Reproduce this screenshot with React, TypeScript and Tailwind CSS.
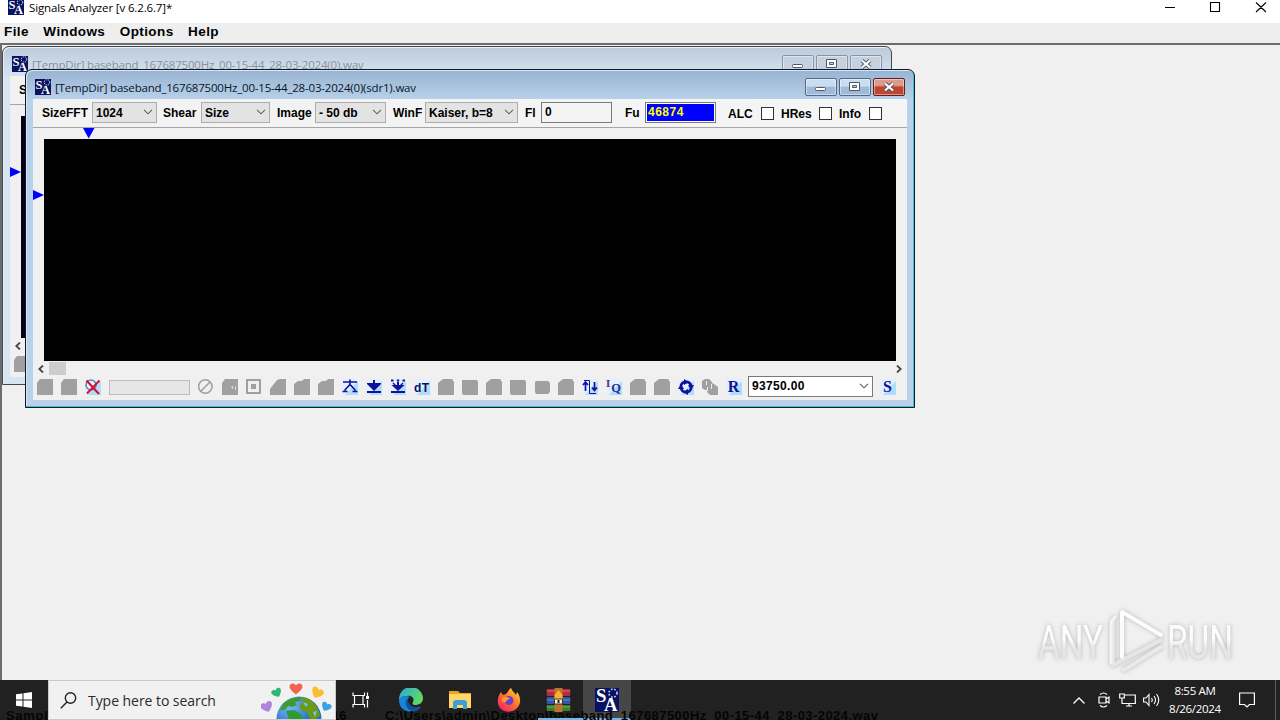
import type { ReactNode } from 'react'

const uiFont = 'font-["Liberation_Sans",Arial,sans-serif]'
const titleFont = 'font-["Open_Sans","Noto_Sans",sans-serif]'

const SaIcon = ({ size = 16 }: { size?: number }) => (
  <svg width={size} height={size} viewBox="0 0 16 16" className="shrink-0">
    <rect width="16" height="16" fill="#0a1160" />
    <text x="0.6" y="9.6" fontSize="12.5" fontWeight="700" fontFamily="Liberation Serif, serif" fill="#fff">S</text>
    <text x="6" y="15.4" fontSize="12.5" fontWeight="700" fontFamily="Liberation Serif, serif" fill="#fff">A</text>
    <circle cx="12" cy="3.4" r="2.7" fill="none" stroke="#b9cdf5" strokeWidth="1.1" strokeDasharray="1.1 1.1" />
  </svg>
)

const Chevron = () => (
  <svg width="10" height="6" viewBox="0 0 10 6" fill="none" stroke="#606060" strokeWidth="1.1" className="shrink-0">
    <path d="M1 .8 5 4.8 9 .8" />
  </svg>
)

const Label = ({ children, className }: { children: ReactNode; className: string }) => (
  <span className={`shrink-0 whitespace-nowrap ${className}`}>{children}</span>
)

const Select = ({ value, className }: { value: string; className: string }) => (
  <div className={`flex h-[21px] shrink-0 -translate-y-px items-center justify-between border border-[#adadad] bg-[#e3e3e3] pl-[3px] pr-[3px] whitespace-nowrap ${className}`}>
    <span className="translate-y-px">{value}</span>
    <Chevron />
  </div>
)

const Check = () => <div className="size-[13px] shrink-0 border border-[#333] bg-white" />

/* ---- bottom tool strip ---- */

const Tool = ({ children }: { children: ReactNode }) => (
  <div className="flex w-6 shrink-0 justify-center">
    <svg width="16" height="16" viewBox="0 0 16 16" fill="none">{children}</svg>
  </div>
)

const Glow = () => (
  <>
    <rect x="0" y="0" width="16" height="16" fill="#e2f1fd" />
    <path d="M16 2v14H3L9 9Z" fill="#b0dcfd" />
  </>
)

const shapes = {
  block: 'M0 4 3 0H16V16H0Z',
  full: 'M0 1H15L16 3V16H1L0 14Z',
  slope: 'M0 16V10L7 1 10 0H16V16Z',
  step: 'M0 16V5L4 2H8L10 0H16V16Z',
  round: 'M0 16V4L5 0H14L16 3V16Z',
  small: 'M1 3 2 2H14L16 4V13L14 15H2L1 13Z',
}

const Gray = ({ kind }: { kind: keyof typeof shapes }) => (
  <Tool><path d={shapes[kind]} fill="#a0a0a0" /></Tool>
)

const Letter = ({ text }: { text: string }) => (
  <Tool>
    <Glow />
    <text x="7.5" y="13" textAnchor="middle" fontSize="16" fontWeight="700" fontFamily="Liberation Serif, serif" fill="#10109a">{text}</text>
  </Tool>
)

const ToolStrip = () => (
  <div className="flex h-[22px] shrink-0 items-center">
    <Gray kind="block" />
    <Gray kind="block" />
    <Tool>
      <Glow />
      <circle cx="6" cy="6" r="5" stroke="#5d83b0" strokeWidth="1.5" />
      <path d="M1.5 1.5 14 15M14.5 1.5 2 14.5" stroke="#d5122b" strokeWidth="2" />
    </Tool>
    <div className="ml-1 mr-1 h-[15px] w-[81px] shrink-0 border border-[#bcbcbc] bg-[#e6e6e6]" />
    <Tool>
      <circle cx="7.3" cy="7.5" r="6.7" stroke="#a0a0a0" strokeWidth="1.6" />
      <path d="m3 12 9-9" stroke="#a0a0a0" strokeWidth="1.6" />
    </Tool>
    <Tool>
      <path d={shapes.block} fill="#a0a0a0" />
      <path d="m9 8 2-1v3zM13 6l1 3-1 3" fill="#eee" />
    </Tool>
    <Tool>
      <path d="M1 1H14V14H1Z" stroke="#a0a0a0" strokeWidth="2" />
      <path d="M5 5H10V10H5Z" fill="#a0a0a0" />
    </Tool>
    <Gray kind="slope" />
    <Gray kind="step" />
    <Gray kind="step" />
    <Tool>
      <Glow />
      <path d="M1 3H15M8 .5V6M2.500 11.500 8 5.500 13.500 11.500M.500 12.500H5.500M10.500 12.500H15.500" stroke="#10109a" strokeWidth="1.6" />
    </Tool>
    <Tool>
      <Glow />
      <path d="M8 1V5M1 13H15" stroke="#10109a" strokeWidth="2" />
      <path d="M1 4H15V5L8 12 1 5Z" fill="#10109a" />
    </Tool>
    <Tool>
      <Glow />
      <path d="M1 1.500H3.500M6.800 1.500H9.200M12.500 1.500H15M8 3V6M1 13H15" stroke="#10109a" strokeWidth="2" />
      <path d="M3 4 5.500 6.500M13 4 10.500 6.500" stroke="#10109a" strokeWidth="1.400" />
      <path d="M1.500 6H14.500L8 12Z" fill="#10109a" />
    </Tool>
    <Tool>
      <Glow />
      <text x="0" y="13" fontSize="12" fontWeight="700" textLength="15" fontFamily="Liberation Sans, sans-serif" fill="#0b1263">dT</text>
    </Tool>
    <Gray kind="round" />
    <Gray kind="full" />
    <Gray kind="round" />
    <Gray kind="full" />
    <Gray kind="small" />
    <Gray kind="round" />
    <Tool>
      <Glow />
      <path d="M3.500 12V3M1 6 3.500 3 6 6M12.500 3V11M10 8.500 12.500 11.500 15 8.500" stroke="#10109a" strokeWidth="1.700" />
      <path d="M2 1.500H7.500V14.500H14" stroke="#10109a" />
    </Tool>
    <Tool>
      <Glow />
      <text x="0" y="8" fontSize="11" fontWeight="700" fontFamily="Liberation Serif, serif" fill="#5b2a83">I</text>
      <text x="5.3" y="12.500" fontSize="12.500" fontWeight="700" fontFamily="Liberation Serif, serif" fill="#26318f">Q</text>
    </Tool>
    <Gray kind="round" />
    <Gray kind="round" />
    <Tool>
      <Glow />
      <circle cx="8" cy="8" r="5.2" stroke="#10109a" strokeWidth="2.600" strokeDasharray="6.600 1.570" />
      <path d="M6 0 11 3 6 6ZM16 6 13 11 10 6ZM10 16 5 13 10 10ZM0 10 3 5 6 10Z" fill="#10109a" />
    </Tool>
    <Tool>
      <path d="M0 2 3 0H7L10 3V11H3L0 9Z" fill="#a0a0a0" />
      <path d="M6 4H10L12 5 16 8V16H8L5 13V4Z" fill="#a0a0a0" />
      <path d="M4.500 2V6M9.500 5V10M5.500 12V8" stroke="#eee" />
    </Tool>
    <Letter text="R" />
    <div className="ml-0.5 mr-[3px] flex h-[21px] w-[125px] shrink-0 -translate-y-px items-center justify-between border border-[#7a7a7a] bg-white pl-[3px] pr-[3px]">
      <span className="tracking-[0.35px]">93750.00</span>
      <Chevron />
    </div>
    <Letter text="S" />
  </div>
)

/* ---- MDI child window ---- */

const CaptionButtons = ({ active }: { active: boolean }) => {
  const plain = active
    ? 'border-[#52698a] bg-linear-to-b from-[#c9dcf0] from-45% to-[#9fbbd9] to-50%'
    : 'border-[#8794a5] bg-[#c4d1de]'
  const close = active
    ? 'border-[#5d1f22] bg-linear-to-b from-[#dc9a8b] from-40% to-[#c0442e] to-50%'
    : 'border-[#8794a5] bg-[#c4d1de]'
  const box = 'flex h-[18px] w-8 items-center justify-center rounded-[2px] border shadow-[inset_0_0_0_1px_#ffffff70]'
  return (
    <div className="mr-[3px] flex gap-0.5">
      <div className={`${box} ${plain}`}>
        <svg width="12" height="12"><rect x=".5" y="6.5" width="10" height="3" rx="1" fill="#fff" stroke="#535666" /></svg>
      </div>
      <div className={`${box} ${plain}`}>
        <svg width="12" height="10"><path d="M.5 .5H10.500V8.500H.5ZM3.500 3.500V5.500H7.500V3.500Z" fill="#fff" fillRule="evenodd" stroke="#535666" /></svg>
      </div>
      <div className={`${box} ${close}`}>
        <svg width="12" height="10" fill="none">
          <path d="m2 1.500 8 7m0-7-8 7" stroke="#535666" strokeWidth="4" />
          <path d="m2 1.500 8 7m0-7-8 7" stroke="#fff" strokeWidth="2.200" />
        </svg>
      </div>
    </div>
  )
}

type ChildProps = { title: string; active?: boolean; place: string }

const ChildWindow = ({ title, active = false, place }: ChildProps) => (
  <div
    className={`absolute h-[339px] w-[890px] rounded-t-[7px] border pr-1.5 pb-[7px] pl-[7px] text-[12px] font-bold text-black ${place} ${
      active
        ? 'border-[#10182b] bg-[#b9d1ea] bg-linear-to-b from-[#98b4d2] to-[#b9d1ea] to-[30px] shadow-[inset_-1px_-1px_0_#42c0d0,inset_1px_1px_0_#d5e6f7]'
        : 'border-[#42464e] bg-[#d7e4f2] bg-linear-to-b from-[#bdcad9] to-[#d7e4f2] to-[30px] shadow-[inset_1px_1px_0_#e8f1fa]'
    }`}
  >
    <div className={`flex h-[29px] items-center pl-0.5 pt-[5px] font-normal ${titleFont}`}>
      <SaIcon />
      <span className={`ml-1 flex-1 translate-y-px text-[11.5px] tracking-[-0.19px] whitespace-nowrap ${active ? 'text-[#08142a]' : 'text-[#8a929d]'}`}>{title}</span>
      <CaptionButtons active={active} />
    </div>
    <div className="flex h-[301px] w-[874px] flex-col bg-[#f0f0f0]">
      <div className="flex h-[29px] shrink-0 items-center border-b border-[#a5a5a5] bg-linear-to-r from-[#f2f2f2] to-[#f5f5f5] pl-[9px]">
        <Label className="w-[50px]">SizeFFT</Label>
        <Select value="1024" className="w-[65px]" />
        <Label className="ml-1.5 w-[38px]">Shear</Label>
        <Select value="Size" className="w-[69px]" />
        <Label className="ml-[7px] w-[38px]">Image</Label>
        <Select value="- 50 db" className="w-[71px]" />
        <Label className="ml-[7px] w-8">WinF</Label>
        <Select value="Kaiser, b=8" className="w-[93px]" />
        <Label className="ml-[7px] w-4">Fl</Label>
        <div className="h-[21px] w-[71px] shrink-0 -translate-y-px border border-[#7a7a7a] pl-[3px] leading-[19px]">0</div>
        <Label className="ml-[13px] w-5">Fu</Label>
        <div className="h-[21px] w-[71px] shrink-0 -translate-y-px border border-[#7a7a7a] bg-[#00f] pl-0.5 leading-[18px] tracking-[0.5px] text-[#ff0] shadow-[inset_0_0_0_1px_#fff]">46874</div>
        <Label className="ml-3 w-[33px] translate-y-px">ALC</Label>
        <Check />
        <Label className="ml-[7px] w-[38px] translate-y-px">HRes</Label>
        <Check />
        <Label className="ml-[7px] w-[30px] translate-y-px">Info</Label>
        <Check />
      </div>
      <svg width="874" height="11" className="shrink-0"><path d="M50 0H61.500L55.700 10.500Z" fill="#00f" /></svg>
      <div className="flex h-[222px] shrink-0">
        <svg width="11" height="222" className="shrink-0"><path d="M0 51V61L11 56Z" fill="#00f" /></svg>
        <div className={`w-[852px] ${active ? 'bg-black' : 'bg-[#080016]'}`} />
      </div>
      <div className="flex h-[15px] shrink-0 items-center justify-between pl-[5px] pr-[5px]">
        <div className="flex items-center gap-[5px]">
          <svg width="6" height="8" fill="none" stroke="#484848" strokeWidth="1.800"><path d="M5 .5 1.300 4 5 7.500" /></svg>
          <div className="h-[13px] w-[17px] bg-[#cdcdcd]" />
        </div>
        <svg width="6" height="8" fill="none" stroke="#484848" strokeWidth="1.800"><path d="M1 .5 4.700 4 1 7.500" /></svg>
      </div>
      <ToolStrip />
    </div>
  </div>
)

const Watermark = () => (
  <svg width="204" height="70" viewBox="0 0 204 70" fill="none" className="absolute left-[1034px] top-[605px] drop-shadow-[0_0_2px_#b4b4b4]">
    <defs>
      <linearGradient id="wm" x1="0" y1="0" x2="0" y2="1">
        <stop offset="0.45" stopColor="#fcfcfc" />
        <stop offset="0.6" stopColor="#e6e6e6" />
      </linearGradient>
    </defs>
    <g fill="url(#wm)" fontFamily="Roboto, sans-serif" fontSize="49" fontWeight="400">
      <text transform="translate(4 54)" textLength="65" lengthAdjust="spacingAndGlyphs">ANY</text>
      <text transform="translate(133 54)" textLength="66" lengthAdjust="spacingAndGlyphs">RUN</text>
    </g>
    <g strokeLinecap="round" strokeLinejoin="round">
      <path d="M90 65 127 42" stroke="#e9e9e9" strokeWidth="4" />
      <path d="M79 14V60L127 35" stroke="#e6e6e6" strokeWidth="4" />
      <path d="M81 12 77 17V58" stroke="#f4f4f4" strokeWidth="3" />
      <path d="M88 52V7L127 30" stroke="#fcfcfc" strokeWidth="4" />
    </g>
  </svg>
)

/* ---- taskbar ---- */

const Heart = ({ x, y, r, fill, s = 1 }: { x: number; y: number; r: number; fill: string; s?: number }) => (
  <path transform={`translate(${x} ${y}) rotate(${r}) scale(${s})`} d="M0 5C-3 3-6 0-6-2.200-6-5.500-1.500-6 0-3.200 1.500-6 6-5.500 6-2.200 6 0 3 3 0 5Z" fill={fill} />
)

const Earth = () => (
  <svg width="72" height="38" viewBox="0 0 72 38">
    <defs>
      <radialGradient id="sea" cx=".3" cy=".2"><stop stopColor="#79baff" /><stop offset="1" stopColor="#2873c9" /></radialGradient>
    </defs>
    <circle cx="38" cy="38" r="22.500" fill="url(#sea)" />
    <path d="M22 23C27 17 35 16 41 16L39 20 34 21 36 24 31 26 27 25 24 29 19 29Z" fill="#3e9b2f" />
    <path d="M41 16C52 17 57 26 59 34L55 38H49L46 31 41 30 38 25 42 21Z" fill="#6a9b17" />
    <path d="M25 30 33 29 40 33 42 38H28Z" fill="#2f9a32" />
    <path d="M42 21 47 23 45 26ZM52 31 56 30 54 36Z" fill="#75c3f5" />
    <Heart x={6} y={26} r={-22} fill="#b083dc" s={1} />
    <Heart x={16} y={12} r={-28} fill="#2fb679" s={0.85} />
    <Heart x={35} y={8} r={0} fill="#f26450" s={1.08} />
    <Heart x={56} y={12} r={28} fill="#fabd2d" s={1.02} />
    <Heart x={65} y={26} r={28} fill="#38a4e6" s={0.85} />
  </svg>
)

const EdgeIcon = () => (
  <svg width="24" height="24" viewBox="0 0 24 24">
    <defs>
      <linearGradient id="edgeTop" x1="0" y1="0" x2="1" y2=".5"><stop stopColor="#2aa5e0" /><stop offset="1" stopColor="#5fdb63" /></linearGradient>
    </defs>
    <path d="M0 12A12 12 0 0 1 24 10C24 15 20 17 16 17 13 17 13 15 14 14 16 10 12 7 8 8 4 8 1 10 0 12Z" fill="url(#edgeTop)" />
    <path d="M0 12C1 8 7 7 11 9 7 10 6 18 13 21 17 22 20 20 22 19 17 26 0 26 0 12Z" fill="#1687d2" />
    <path d="M9 10C5 13 6 22 14 23 18 23 21 20 22 18 16 21 8 18 9 10Z" fill="#12509f" />
  </svg>
)

const FolderIcon = () => (
  <svg width="22" height="20" viewBox="0 0 22 20">
    <path d="M0 1H9L11 3H22V18H0Z" fill="#e8a61c" />
    <path d="M0 4H22V18H0Z" fill="#ffd768" />
    <path d="M4 19V12L6 10H16L18 12V19H14V15H8V19Z" fill="#3d9fd9" />
  </svg>
)

const FirefoxIcon = () => (
  <svg width="24" height="24" viewBox="0 0 24 24">
    <defs>
      <linearGradient id="fox" x1="1" y1="0" x2=".2" y2="1"><stop stopColor="#ffe23c" /><stop offset=".5" stopColor="#ff7a25" /><stop offset="1" stopColor="#f3206a" /></linearGradient>
    </defs>
    <path d="M4 4 6 7 9 6C11 4 12 1 14 0 15 3 18 5 19 7L20 4C24 9 24 15 21 19 17 25 7 25 3 20-1 15 1 8 4 4Z" fill="url(#fox)" />
    <circle cx="12" cy="12.500" r="4.500" fill="#6a3fd0" />
    <path d="M5 10C9 8 11 10 13 10 12 12 9 12 9 14 5 15 4 12 5 10Z" fill="#ff9a2b" />
  </svg>
)

const RarIcon = () => (
  <svg width="24" height="24" viewBox="0 0 24 24">
    <rect y="1" width="24" height="7" rx="1" fill="#b52a3d" />
    <rect y="9" width="24" height="7" rx="1" fill="#3356ab" />
    <rect y="17" width="24" height="6" rx="1" fill="#35822f" />
    <path d="M0 3H24M0 12H24M0 19H24" stroke="#ffffff50" />
    <path d="M8 0H16V24H8Z" fill="#bf7529" />
    <path d="M8 7 12 2 16 7V11H8Z" fill="#f5b331" />
    <path d="M8 11H16V16H8Z" fill="#f5f0dd" stroke="#43331d" />
    <path d="M12 12V15" stroke="#222" strokeWidth="2" />
  </svg>
)

/* status bar showing faintly through the taskbar */
const StatusText = () => (
  <div className="pointer-events-none absolute inset-x-0 bottom-0 h-3 overflow-hidden text-[13px] leading-[15px] font-bold whitespace-nowrap text-[#050505]">
    <div className={`flex pl-1.5 ${uiFont}`}>
      <span className="w-[42px] overflow-hidden tracking-[0.7px]">Sample</span>
      <span className="ml-[284px] w-[53px]">16</span>
      <span className="tracking-[0.44px]">C:\Users\admin\Desktop\baseband_167687500Hz_00-15-44_28-03-2024.wav</span>
    </div>
  </div>
)

const Taskbar = () => (
  <div className={`relative flex h-10 shrink-0 bg-[#212121] text-white ${titleFont}`}>
    <StatusText />
    <div className="flex w-12 items-center justify-center">
      <svg width="16" height="16" viewBox="0 0 16 16" fill="#fff"><path d="M0 2.300 6.500 1.400V7.500H0ZM7.500 1.300 16 0V7.500H7.500ZM0 8.500H6.500V14.600L0 13.700ZM7.500 8.500H16V16L7.500 14.700Z" /></svg>
    </div>
    <div className="z-10 flex w-72 items-center border border-[#c9c9c9] bg-[#f1f1f1] pl-[11px] text-[#2b2b2b]">
      <svg width="17" height="17" viewBox="0 0 17 17" fill="none" stroke="#222" strokeWidth="1.400"><circle cx="10.500" cy="6" r="5.200" /><path d="M7 10 .8 16.200" /></svg>
      <span className="ml-[11px] text-[14px] tracking-[-0.05px] whitespace-nowrap">Type here to search</span>
      <div className="ml-auto mr-0.5"><Earth /></div>
    </div>
    <div className="flex w-12 items-center justify-center">
      <svg width="17" height="16" fill="none" stroke="#fff" strokeWidth="1.200"><path d="M1 .5V3.500H12.500V.5M1 15.500V12.500H12.500V15.500M2.500 3.500V12.500M11 3.500V12.500M15.500 .5V4M15.500 8V15.500" /><path d="M14 4H17V7H14Z" fill="#fff" stroke="none" /></svg>
    </div>
    <div className="flex w-[54px] items-center justify-center"><EdgeIcon /></div>
    <div className="flex w-11 items-center justify-center"><FolderIcon /></div>
    <div className="flex w-[54px] items-center justify-center"><FirefoxIcon /></div>
    <div className="flex w-[47px] flex-col items-center">
      <div className="flex flex-1 -translate-x-[1.5px] items-center pt-0.5"><RarIcon /></div>
      <div className="h-0.5 w-[45px] translate-x-px bg-[#76b9ed]" />
    </div>
    <div className="flex w-12 flex-col items-center bg-[#4c4c4c]/85">
      <div className="flex flex-1 items-center pt-0.5"><SaIcon size={24} /></div>
      <div className="h-0.5 w-full bg-[#76b9ed]" />
    </div>
    <div className="ml-auto flex items-center">
      <svg width="12" height="7" fill="none" stroke="#fff" strokeWidth="1.300"><path d="m.5 6.500 5.500-5.500 5.500 5.500" /></svg>
      <svg width="14" height="16" fill="none" stroke="#fff" strokeWidth="1.200" className="ml-3"><path d="M2 5H9V11H2ZM9 7 12 5V11L9 9M3 2.500Q6.500-.5 10 2.500M3 13.500Q6.500 16.500 10 13.500" /></svg>
      <svg width="17" height="14" fill="none" stroke="#fff" strokeWidth="1.200" className="ml-2"><path d="M6 2H16.300V10.500H5M10 10.500V13M7 13H13M.7 1H5.300V5H.7ZM3 5V10.500H5" /></svg>
      <svg width="17" height="14" fill="none" stroke="#fff" strokeWidth="1.100" className="ml-[7px]"><path d="M.6 5H3L6 1.500V12.500L3 9H.6ZM8.500 5Q10 7 8.500 9M11 3Q14 7 11 11M13.500 1Q18 7 13.500 13" /></svg>
      <div className="ml-2 w-[54px] text-center text-[11.500px] leading-[18px] tracking-[-0.3px] whitespace-nowrap">
        <div>8:55 AM</div>
        <div>8/26/2024</div>
      </div>
      <svg width="16" height="16" fill="none" stroke="#fff" strokeWidth="1.200" className="ml-[17px]"><path d="M.6 1H15.400V12.500H10.500L8 15 5.500 12.500H.6Z" /></svg>
      <div className="ml-5 mr-1 h-10 w-px bg-[#5c5c5c]" />
    </div>
  </div>
)

export default function App() {
  return (
    <div className={`flex h-[720px] w-[1280px] flex-col overflow-hidden bg-[#f0f0f0] text-black ${uiFont}`}>
      <div className="flex h-[23px] shrink-0 bg-white pl-2">
        <div className="-mt-px"><SaIcon /></div>
        <span className={`ml-[5px] text-[11.500px] leading-[16px] tracking-[-0.14px] ${titleFont}`}>Signals Analyzer [v 6.2.6.7]*</span>
        <svg width="104" height="15" fill="none" stroke="#000" strokeWidth="1.100" className="ml-auto mr-[11px]">
          <path d="M0 7.500H10M45.500 2.500H54.500V11.500H45.500ZM91 2.500 101 12M101 2.500 91 12" />
        </svg>
      </div>
      <div className="flex h-5 shrink-0 gap-[14.5px] bg-[#eee] pl-1 text-[13.500px] leading-[17px] font-bold tracking-[0.4px]">
        <span>File</span>
        <span>Windows</span>
        <span>Options</span>
        <span>Help</span>
      </div>
      <div className="min-h-0 flex-1 border-t-2 border-l-2 border-t-[#6c6c6c] border-l-[#6c6c6c]">
        <ChildWindow title="[TempDir] baseband_167687500Hz_00-15-44_28-03-2024(0).wav" place="left-[2px] top-[46px]" />
        <ChildWindow active title="[TempDir] baseband_167687500Hz_00-15-44_28-03-2024(0)(sdr1).wav" place="left-[25px] top-[69px]" />
        <Watermark />
      </div>
      <Taskbar />
    </div>
  )
}
